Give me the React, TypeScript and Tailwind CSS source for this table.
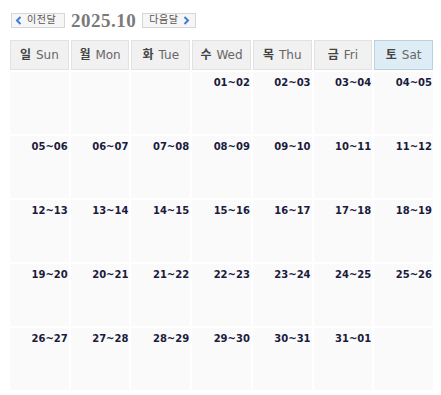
const days = [
  { ko: "일", en: "Sun" },
  { ko: "월", en: "Mon" },
  { ko: "화", en: "Tue" },
  { ko: "수", en: "Wed" },
  { ko: "목", en: "Thu" },
  { ko: "금", en: "Fri" },
  { ko: "토", en: "Sat" },
];

// October 2025 starts on a Wednesday; each cell shows "day~next day"
const pad = (n: number) => String(n).padStart(2, "0");
const cells: string[] = [];
for (let i = 0; i < 3; i++) cells.push("");
for (let d = 1; d <= 31; d++) cells.push(`${pad(d)}~${pad(d === 31 ? 1 : d + 1)}`);
while (cells.length < 35) cells.push("");

export default function App() {
  return (
    <div className="w-[441px] h-[395px] bg-white font-['DejaVu_Sans','Noto_Sans_CJK_KR',sans-serif] overflow-hidden">
      <div className="flex items-center gap-[6px] pl-[11px] pt-[10px] h-[30px]">
        <button className="flex items-center gap-[5px] w-[54px] h-[15px] pl-[3px] border border-[#d6d6d6] bg-[#f6f6f6] text-[10px] leading-none text-[#555] tracking-[0.5px]">
          <svg width="7" height="9" viewBox="0 0 7 9">
            <path d="M5.5 1 L2 4.5 L5.5 8" fill="none" stroke="#3b7dd8" strokeWidth="2" />
          </svg>
          이전달
        </button>
        <span className="font-['Liberation_Serif',serif] font-bold text-[19px] leading-none text-[#7a7a7a] tracking-[0.5px]">
          2025.10
        </span>
        <button className="flex items-center gap-[5px] w-[54px] h-[15px] pl-[6px] border border-[#d6d6d6] bg-[#f6f6f6] text-[10px] leading-none text-[#555] tracking-[0.5px]">
          다음달
          <svg width="7" height="9" viewBox="0 0 7 9">
            <path d="M1.5 1 L5 4.5 L1.5 8" fill="none" stroke="#3b7dd8" strokeWidth="2" />
          </svg>
        </button>
      </div>

      <div className="ml-[10px] mt-[10px] w-[423px] grid grid-cols-7 gap-[2px]">
        {days.map((d, i) => (
          <div
            key={d.en}
            className={`h-[30px] flex items-center justify-center gap-[5px] border text-[12px] text-[#666] ${
              i === 6 ? "bg-[#deedf5] border-[#b7d3e3]" : "bg-[#f1f1f1] border-[#e2e2e2]"
            }`}
          >
            <span className="font-bold text-[#444]">{d.ko}</span>
            <span>{d.en}</span>
          </div>
        ))}
        {cells.map((c, i) => (
          <div key={i} className="h-[62px] bg-[#fafafa] flex flex-col">
            <div className="h-[24px] pt-[5px] pr-[1px] text-right text-[10px] font-bold leading-[12px] text-[#1b1b3d]">
              {c}
            </div>
          </div>
        ))}
      </div>
    </div>
  );
}
